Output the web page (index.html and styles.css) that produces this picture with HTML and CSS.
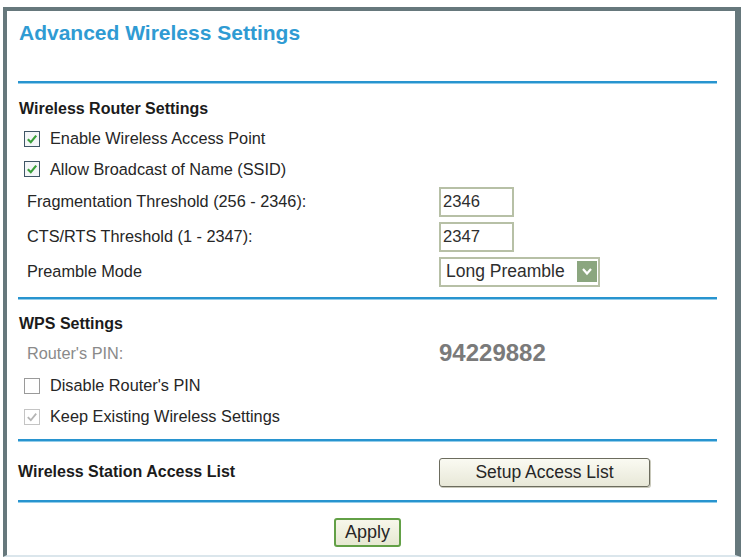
FILE: index.html
```html
<!DOCTYPE html>
<html>
<head>
<meta charset="utf-8">
<title>Advanced Wireless Settings</title>
<link rel="stylesheet" href="styles.css">
</head>
<body>
<div class="frame">
  <h1 class="title">Advanced Wireless Settings</h1>
  <div class="rule rule-1"></div>

  <div class="heading h-wrs">Wireless Router Settings</div>
  <div class="cbrow cb-a">
    <svg class="cb" viewBox="0 0 16 16" width="16" height="16"><rect x="0.5" y="0.5" width="15" height="15" fill="#f4f6f8" stroke="#3e5566"/><path d="M3.8 8.2 L6.8 11.2 L12.2 4.6" fill="none" stroke="#3aa03a" stroke-width="2.2"/></svg>
    <span>Enable Wireless Access Point</span>
  </div>
  <div class="cbrow cb-b">
    <svg class="cb" viewBox="0 0 16 16" width="16" height="16"><rect x="0.5" y="0.5" width="15" height="15" fill="#f4f6f8" stroke="#3e5566"/><path d="M3.8 8.2 L6.8 11.2 L12.2 4.6" fill="none" stroke="#3aa03a" stroke-width="2.2"/></svg>
    <span>Allow Broadcast of Name (SSID)</span>
  </div>

  <div class="formrow">
    <span class="label">Fragmentation Threshold (256 - 2346):</span>
    <span class="input">2346</span>
  </div>
  <div class="formrow">
    <span class="label">CTS/RTS Threshold (1 - 2347):</span>
    <span class="input">2347</span>
  </div>
  <div class="formrow">
    <span class="label">Preamble Mode</span>
    <span class="select">Long Preamble
      <span class="arrow"><svg viewBox="0 0 20 21" width="20" height="21"><path d="M6 8 L10 12.5 L14 8" fill="none" stroke="#ffffff" stroke-width="2.2"/></svg></span>
    </span>
  </div>
  <div class="rule rule-2"></div>

  <div class="heading h-wps">WPS Settings</div>
  <div class="formrow pinrow">
    <span class="label muted">Router's PIN:</span>
    <span class="pin">94229882</span>
  </div>
  <div class="cbrow cb-c">
    <svg class="cb" viewBox="0 0 16 16" width="16" height="16"><rect x="0.5" y="0.5" width="15" height="15" fill="#ffffff" stroke="#9a9a9a"/></svg>
    <span>Disable Router's PIN</span>
  </div>
  <div class="cbrow cb-d">
    <svg class="cb" viewBox="0 0 16 16" width="16" height="16"><rect x="0.5" y="0.5" width="15" height="15" fill="#ffffff" stroke="#c4c4c4"/><path d="M3.8 8.2 L6.8 11.2 L12.2 4.6" fill="none" stroke="#b4b4b4" stroke-width="1.8"/></svg>
    <span>Keep Existing Wireless Settings</span>
  </div>
  <div class="rule rule-3"></div>

  <div class="formrow accessrow">
    <span class="heading">Wireless Station Access List</span>
    <span class="btn setup">Setup Access List</span>
  </div>
  <div class="rule rule-4"></div>

  <div class="applyrow">
    <span class="btn apply">Apply</span>
  </div>
</div>
</body>
</html>
```

FILE: styles.css
```css
html, body {
  margin: 0;
  padding: 0;
  background: #ffffff;
}

body {
  font-family: "Liberation Sans", Arial, sans-serif;
  color: #262626;
  font-size: 16.3px;
}

.frame {
  margin: 7px 0 0 3px;
  width: 728px;
  height: 544px;
  border-top: 4px solid #66787c;
  border-left: 4px solid #66787c;
  border-right: 6px solid #66787c;
  border-bottom: 2px solid #dbe6ec;
  padding: 10px 18px 0 11px;
  box-sizing: content-box;
  display: flex;
  flex-direction: column;
  width: 699px;
  height: 534px;
}

.title {
  margin: 0 0 0 1px;
  font-size: 21px;
  line-height: 24px;
  font-weight: bold;
  color: #2f9bd3;
  height: 24px;
}

.rule {
  height: 0;
  border-top: 2px solid #2894cf;
  border-bottom: 1px solid #94cdea;
}

.rule-1 { margin-top: 36px; }
.rule-2 { margin-top: 8px; }
.rule-3 { margin-top: 7px; }
.rule-4 { margin-top: 13px; }

.heading {
  font-weight: bold;
  font-size: 16px;
  color: #1b1b1b;
  padding-left: 1px;
  display: flex;
  align-items: center;
}

.h-wrs { margin-top: 11px; height: 28px; }
.h-wps { margin-top: 10px; height: 28px; }

.cbrow {
  display: flex;
  align-items: center;
  padding-left: 6px;
  gap: 10px;
  height: 30px;
}

.cb-a { height: 31px; }
.cb-c { margin-top: 2px; height: 31px; }
.cb-d { height: 31px; }

.cb { display: block; flex: none; }

.formrow {
  display: grid;
  grid-template-columns: 421px auto;
  align-items: center;
  height: 35px;
}

.label {
  padding-left: 9px;
}

.muted { color: #8a8a8a; }

.pinrow { height: 30px; }

.pin {
  font-weight: bold;
  font-size: 24px;
  color: #7a7a7a;
}

.input {
  box-sizing: border-box;
  width: 75px;
  height: 30px;
  border: 2px solid #b7c0a6;
  background: #ffffff;
  padding-left: 2px;
  font-size: 16.6px;
  color: #2e2e2e;
  display: flex;
  align-items: center;
}

.select {
  box-sizing: border-box;
  width: 161px;
  height: 30px;
  border: 2px solid #b7c0a6;
  background: #ffffff;
  padding-left: 5px;
  font-size: 17.5px;
  color: #2e2e2e;
  display: flex;
  align-items: center;
  position: relative;
}

.arrow {
  position: absolute;
  right: 1px;
  top: 2px;
  width: 20px;
  height: 21px;
  background: #8ba67f;
  display: flex;
}

.arrow svg { display: block; }

.accessrow {
  margin-top: 15px;
  height: 30px;
}

.accessrow .heading { padding-left: 0; }

.btn {
  box-sizing: border-box;
  display: flex;
  align-items: center;
  justify-content: center;
  color: #262626;
}

.setup {
  width: 211px;
  height: 29px;
  border: 1px solid #6c6c5e;
  border-radius: 3px;
  background: linear-gradient(#fafaf2, #e8e8d8);
  box-shadow: 1px 1px 0 #c9c9bb;
  font-size: 17.5px;
}

.applyrow {
  margin-top: 15px;
  display: flex;
  justify-content: center;
}

.apply {
  width: 67px;
  height: 29px;
  border: 2px solid #62a046;
  border-radius: 3px;
  background: linear-gradient(#f7f7ea, #e6e8d2);
  font-size: 18px;
}
```
